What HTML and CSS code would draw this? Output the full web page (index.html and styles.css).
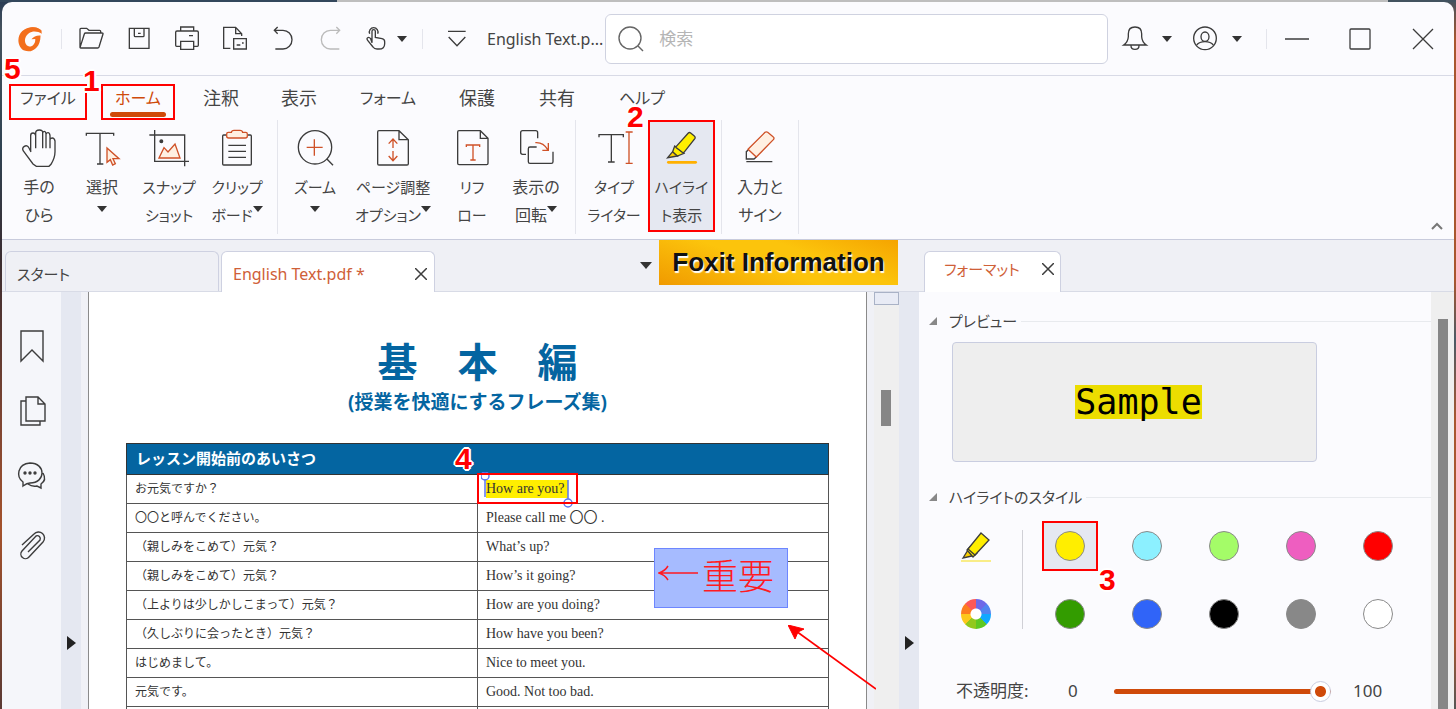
FILE: index.html
```html
<!DOCTYPE html>
<html lang="ja">
<head>
<meta charset="utf-8">
<title>English Text.pdf</title>
<link rel="stylesheet" href="styles.css">
</head>
<body>
<div class="window">
  <header class="titlebar">
    <svg class="logo" viewBox="50 74 80 80" aria-label="Foxit"><path d="M122 90C108 76 82 78 68 91C50 108 55 138 74 147C96 156 121 138 120 104C110 103 100 106 94 115L105 114C106 127 96 138 86 135C72 130 72 108 86 98C98 90 112 92 124 99Z" fill="#f36f1d"/><path d="M84 85C100 76 118 82 125 93C112 86 98 84 84 85Z" fill="#f36f1d"/></svg>
    <span class="divider"></span>
    <button class="tool" aria-label="開く"><svg viewBox="230 74 84 84"><path d="M239 142V87q0-3 3-3h17l7 6h32q3 0 3 3v6M239 142l13-41q1-3 4-3h49q4 0 3 3l-12 39q-1 3-4 3H241q-2 0-2-2"/></svg></button>
    <button class="tool" aria-label="保存"><svg viewBox="374 74 84 84"><path d="M387 84h59v60h-59zM402 84v22q0 3 3 3h23q3 0 3-3V84M413 99h8"/></svg></button>
    <button class="tool" aria-label="印刷"><svg viewBox="517 74 84 84"><path d="M540 92V80h39v12M540 138h-12q-3 0-3-3V96q0-4 4-4h60q4 0 4 4v39q0 3-3 3h-11M540 123h39v24h-39zM565 106h12"/></svg></button>
    <button class="tool" aria-label="ページ"><svg viewBox="660 74 84 84"><path d="M688 144h-20V81h36l18 19v7M704 81v19h18M698 115h38v31h-38zM707 134h11M723 128h5"/></svg></button>
    <button class="tool" aria-label="元に戻す"><svg viewBox="801 74 84 84"><path d="M827 80l-10 10 10 10M817 90h26a27 28 0 0 1 0 56h-23"/></svg></button>
    <button class="tool faded" aria-label="やり直し"><svg viewBox="945 74 84 84"><path d="M1003 80l10 10-10 10M1013 90h-28a27 28 0 0 0 0 56h27"/></svg></button>
    <button class="tool narrow" aria-label="タッチモード"><svg viewBox="1089 74 84 84"><path d="M1119 127V93q0-5 5-5t5 5v18l20 4q8 2 8 9v6q0 16-17 16h-6q-8 0-12-6l-16-20q-4-5 0-8t9 3zM1112 100a13 13 0 1 1 24 0"/></svg></button>
    <button class="drop" aria-label="タッチモードの選択"><svg class="caret" viewBox="0 0 10 6"><path d="M0 0h10l-5 6z"/></svg></button>
    <span class="divider"></span>
    <button class="tool" aria-label="カスタマイズ"><svg viewBox="1330 74 84 84"><path d="M1345 93h53M1347 110l25 26 25-26"/></svg></button>
    <span class="doc-name">English Text.p...</span>
    <label class="search">
      <svg viewBox="0 0 28 28"><circle cx="13" cy="13" r="11"/><path d="M21 21l5 5"/></svg>
      <input type="search" placeholder="検索" aria-label="検索">
    </label>
    <div class="account">
      <button class="tool narrow" aria-label="通知"><svg viewBox="434 74 84 84"><path d="M442 134q13-9 14-25v-9q0-20 20-20t20 20v9q1 16 14 25zM464 136q0 11 12 11t12-11"/></svg></button>
      <button class="drop" aria-label="通知の選択"><svg class="caret" viewBox="0 0 10 6"><path d="M0 0h10l-5 6z"/></svg></button>
      <button class="tool narrow" aria-label="ユーザー"><svg viewBox="645 74 84 84"><circle cx="687" cy="114" r="34"/><ellipse cx="687" cy="109" rx="12" ry="14"/><path d="M662 134q8-10 25-10t25 10"/></svg></button>
      <button class="drop" aria-label="ユーザーの選択"><svg class="caret" viewBox="0 0 10 6"><path d="M0 0h10l-5 6z"/></svg></button>
      <span class="divider"></span>
    </div>
    <div class="controls">
      <button class="tool" aria-label="最小化"><svg viewBox="0 0 28 28"><path d="M2 14h24"/></svg></button>
      <button class="tool" aria-label="最大化"><svg viewBox="0 0 28 28"><rect x="4" y="4" width="20" height="20" rx="1"/></svg></button>
      <button class="tool" aria-label="閉じる"><svg viewBox="0 0 28 28"><path d="M4 4l20 20M24 4L4 24"/></svg></button>
    </div>
  </header>

  <nav class="menu">
    <button class="menu-item boxed">ファイル<b class="step step-5">5</b></button>
    <button class="menu-item boxed current">ホーム<b class="step step-1">1</b></button>
    <button class="menu-item kanji">注釈</button>
    <button class="menu-item kanji">表示</button>
    <button class="menu-item">フォーム</button>
    <button class="menu-item kanji">保護</button>
    <button class="menu-item kanji">共有</button>
    <button class="menu-item">ヘルプ</button>
  </nav>

  <section class="ribbon">
    <div class="group group-tools">
      <button class="command"><svg viewBox="57 39 120 120"><path d="M92 108V62q0-8 7-8t8 8v38M107 62v-8q0-9 11-9t10 9v46M128 54q1-5 5-5t5 7v44M138 58q1-5 6-5t6 9v38M150 74q1-5 7-5t8 9v32q0 18-12 38l-6 6h-38l-10-7-29-39q-5-9 3-14t14 5l6 12"/></svg><span>手の<br>ひら</span></button>
      <button class="command"><svg viewBox="246 39 120 120"><path d="M259 62v-7h82v7M300 55v91M291 147h19"/><path class="accent" d="M321 99v43l10-8 7 16 8-4-7-15h18z"/></svg><span>選択<br><svg class="caret" viewBox="0 0 10 6"><path d="M0 0h10l-5 6z"/></svg></span></button>
      <button class="command kana"><svg viewBox="447 39 120 120"><path d="M448 60h106v94M464 45v94h103"/><circle class="dot" cx="484" cy="79" r="4"/><path class="accent" d="M477 129l15-31 12 13 21-24 15 42z"/></svg><span>スナップ<br>ショット</span></button>
      <button class="command kana"><svg viewBox="651 39 120 120"><rect x="668" y="60" width="86" height="90" rx="3"/><path class="accent" d="M694 52q1-6 8-6h18q7 0 8 6h9q5 0 5 5v6q0 6-6 6h-50q-6 0-6-6v-6q0-5 5-5z"/><path d="M685 91h53M685 109h53M685 127h53"/></svg><span>クリップ<br>ボード<svg class="caret" viewBox="0 0 10 6"><path d="M0 0h10l-5 6z"/></svg></span></button>
    </div>
    <div class="group group-view">
      <button class="command kana"><svg viewBox="885 39 120 120"><circle cx="945" cy="97" r="50"/><path d="M980 131l19 20"/><path class="line" d="M920 97h48M943 73v49"/></svg><span>ズーム<br><svg class="caret" viewBox="0 0 10 6"><path d="M0 0h10l-5 6z"/></svg></span></button>
      <button class="command kana"><svg viewBox="1119 39 120 120"><path d="M1197 47h-60q-4 0-4 4v95q0 4 4 4h84q4 0 4-4V74zM1197 48v26h27"/><path class="line" d="M1179 73v26M1166 86l13-14 13 14M1179 108v28M1166 123l13 14 13-14"/></svg><span>ページ調整<br>オプション<svg class="caret" viewBox="0 0 10 6"><path d="M0 0h10l-5 6z"/></svg></span></button>
      <button class="command kana"><svg viewBox="36 54 120 120"><path d="M121 62H57q-4 0-4 4v94q0 4 4 4h83q4 0 4-4V85zM121 63v22h23"/><path class="line" d="M79 111v-6h40v6M99 105v45M91 150h16"/></svg><span>リフ<br>ロー</span></button>
      <button class="command"><svg viewBox="228 54 120 120"><path d="M258 133h-10q-6 0-6-6V68q0-6 6-6h39q6 0 6 6v17M290 111h-20q-5 0-5 5v39q0 5 5 5h64q5 0 5-5v-30"/><path class="line" d="M286 98q24-2 37 21M325 99v22h-18"/></svg><span>表示の<br>回転<svg class="caret" viewBox="0 0 10 6"><path d="M0 0h10l-5 6z"/></svg></span></button>
    </div>
    <div class="group group-text">
      <button class="command kana"><svg viewBox="462 54 120 120"><path d="M477 82v-8h73v8M514 74v82M504 156h20"/><path class="line" d="M557 66h21M567 66v94M557 160h21"/></svg><span>タイプ<br>ライター</span></button>
      <button class="command kana active"><svg viewBox="664 54 120 120"><path d="M681 143l15-18 14 13z" fill="#fbd000"/><path d="M696 125l6-17 28 22-20 8z" fill="#ffee00"/><path d="M743 69q3-3 7 0l11 9q4 3 2 7l-33 42q-2 2-5 0l-18-14q-2-2 0-4z" fill="#ffee00"/><path class="underline" d="M683 157h82"/></svg><span>ハイライ<br>ト表示</span><b class="step step-2">2</b></button>
    </div>
    <div class="group group-sign">
      <button class="command"><svg viewBox="897 54 120 120"><path d="M922 120l-6 5v22h23l7-6M916 155h78"/><path class="accent" d="M972 67q4-3 8 0l17 14q4 3 0 8l-51 52-25-23z"/></svg><span>入力と<br>サイン</span></button>
    </div>
    <button class="collapse" aria-label="リボンを折りたたむ"><svg viewBox="0 0 12 8"><path d="M1 7l5-5 5 5"/></svg></button>
  </section>

  <div class="tabbar">
    <div class="doc-tabs">
      <button class="tab tab-doc kana">スタート</button>
      <div class="tab tab-doc selected"><span>English Text.pdf *</span><button class="close" aria-label="タブを閉じる"><svg viewBox="0 0 12 12"><path d="M0 0l12 12M12 0L0 12"/></svg></button></div>
      <button class="tab-list" aria-label="タブ一覧"><svg viewBox="0 0 12 7"><path d="M0 0h12l-6 7z"/></svg></button>
      <strong class="banner">Foxit Information</strong>
    </div>
    <div class="panel-tabs">
      <div class="tab tab-panel kana selected"><span>フォーマット</span><button class="close" aria-label="パネルを閉じる"><svg viewBox="0 0 12 12"><path d="M0 0l12 12M12 0L0 12"/></svg></button></div>
    </div>
  </div>

  <div class="workspace">
    <aside class="sidebar">
      <button aria-label="しおり"><svg viewBox="15 326 34 40"><path d="M21 331h22v30l-11-11-11 11z"/></svg></button>
      <button aria-label="ページ"><svg viewBox="15 392 34 40"><path d="M26 397h12l7 7v17H26zM38 397v7h7M26 401h-5v24h19v-4"/></svg></button>
      <button aria-label="注釈"><svg viewBox="15 458 34 40"><path d="M23 482c-7-5-6-18 7-19c16 0 16 20 0 20q-3 0-7 3zM43 473q4 7-2 11v4l-4-2q-5 1-9-2"/><circle class="dot" cx="25" cy="473" r="1"/><circle class="dot" cx="30" cy="473" r="1"/><circle class="dot" cx="35" cy="473" r="1"/></svg></button>
      <button aria-label="添付"><svg viewBox="15 524 34 40"><path d="M22 545l12-11a6 6 0 0 1 9 8l-14 15a4 4 0 0 1-7-6l14-15a3 3 0 0 1 4 4l-12 12"/></svg></button>
    </aside>
    <button class="handle" aria-label="ナビゲーションを開く"><svg viewBox="0 0 9 14"><path d="M0 0l9 7-9 7z"/></svg></button>
    <main class="canvas">
      <article class="page">
        <h1>基　本　編</h1>
        <p class="subtitle">(授業を快適にするフレーズ集)</p>
        <table class="phrases">
          <thead><tr><th colspan="2">レッスン開始前のあいさつ</th></tr></thead>
          <tbody>
            <tr><td>お元気ですか？</td><td class="english"><mark>How are you?<svg class="grips" viewBox="0 0 92 36"><path d="M4 7v18M87 8v19"/><circle cx="4" cy="4" r="4"/><circle cx="87" cy="31" r="4"/></svg><span class="frame"></span><b class="step step-4">4</b></mark></td></tr>
            <tr><td>〇〇と呼んでください。</td><td class="english">Please call me 〇〇 .</td></tr>
            <tr><td>（親しみをこめて）元気？</td><td class="english">What’s up?</td></tr>
            <tr><td>（親しみをこめて）元気？</td><td class="english">How’s it going?</td></tr>
            <tr><td>（上よりは少しかしこまって）元気？</td><td class="english">How are you doing?</td></tr>
            <tr><td>（久しぶりに会ったとき）元気？</td><td class="english">How have you been?</td></tr>
            <tr><td>はじめまして。</td><td class="english">Nice to meet you.</td></tr>
            <tr><td>元気です。</td><td class="english">Good. Not too bad.</td></tr>
            <tr><td>&nbsp;</td><td class="english">&nbsp;</td></tr>
          </tbody>
        </table>
        <div class="note"><svg viewBox="0 0 40 16"><path d="M1 8h39M10 1Q7 6 1 8q6 2 9 7"/></svg>重要</div>
        <svg class="pointer" viewBox="0 0 88 65"><path d="M88 64L8 6" stroke="#f00" stroke-width="1.6"/><path d="M0 0l16 4-6 3-3 7z" fill="#f00" stroke="#f00"/></svg>
      </article>
    </main>
    <div class="doc-scroll"><span class="split"></span><span class="thumb"></span></div>
    <button class="handle" aria-label="パネルを閉じる"><svg viewBox="0 0 9 14"><path d="M0 0l9 7-9 7z"/></svg></button>
    <aside class="panel">
      <div class="panel-body">
        <h2><svg viewBox="0 0 8 8"><path d="M8 0v8H0z"/></svg>プレビュー</h2>
        <div class="preview"><span>Sample</span></div>
        <h2><svg viewBox="0 0 8 8"><path d="M8 0v8H0z"/></svg>ハイライトのスタイル</h2>
        <div class="styles">
          <div class="kinds">
            <button aria-label="マーカー"><svg viewBox="0 0 32 32"><path d="M3 28l5-8 4 6z" fill="#fbd000"/><path d="M7 20l3-3 7 6-4 4z" fill="#ffee00"/><path d="M21 3l8 7-14 15-7-6z" fill="#ffee00"/><path class="base" d="M1 31h30"/></svg></button>
            <button aria-label="その他の色"><span class="wheel"></span></button>
          </div>
          <div class="swatches">
            <label class="swatch chosen"><input type="radio" name="color" class="yellow" aria-label="黄" checked><b class="step step-3">3</b></label>
            <label class="swatch"><input type="radio" name="color" class="cyan" aria-label="水色"></label>
            <label class="swatch"><input type="radio" name="color" class="lime" aria-label="黄緑"></label>
            <label class="swatch"><input type="radio" name="color" class="pink" aria-label="ピンク"></label>
            <label class="swatch"><input type="radio" name="color" class="red" aria-label="赤"></label>
            <label class="swatch"><input type="radio" name="color" class="green" aria-label="緑"></label>
            <label class="swatch"><input type="radio" name="color" class="blue" aria-label="青"></label>
            <label class="swatch"><input type="radio" name="color" class="black" aria-label="黒"></label>
            <label class="swatch"><input type="radio" name="color" class="gray" aria-label="灰"></label>
            <label class="swatch"><input type="radio" name="color" class="white" aria-label="白"></label>
          </div>
        </div>
        <div class="opacity">
          <label for="opacity">不透明度:</label>
          <span class="min">0</span>
          <input id="opacity" type="range" min="0" max="100" value="100">
          <output for="opacity">100</output>
        </div>
      </div>
      <div class="panel-scroll"><span class="thumb"></span></div>
    </aside>
  </div>
</div>
</body>
</html>
```
FILE: styles.css
```css
* { box-sizing: border-box; }

body {
  margin: 0;
  height: 100vh;
  padding: 2px 2px 0;
  overflow: hidden;
  background:
    linear-gradient(90deg, #33475c 337px, #bebebe 337px, #bebebe 1388px, #42525f 1388px) top / 100% 2px no-repeat,
    linear-gradient(#2a3c55 0, #46535e 30px, #2f4252 150px, #3a2c30 260px, #7e4532 420px, #a4522c 530px, #5a3a34 709px) left / 50% 100% no-repeat,
    linear-gradient(#42525f 0, #a8562e 40px, #a8562e 280px, #4b5a66 340px, #a8562e 420px, #a8562e 640px, #555 709px) right / 50% 100% no-repeat;
  color: #444;
  font-family: "Noto Sans", "Noto Sans CJK JP", sans-serif;
  font-size: 16px;
}

button {
  margin: 0;
  padding: 0;
  border: 0;
  background: none;
  color: inherit;
  font: inherit;
}

svg { display: block; fill: none; stroke: #3c3c3c; }
.dot { fill: #3c3c3c; }

.window {
  display: flex;
  flex-direction: column;
  height: 100%;
  overflow: hidden;
  border-radius: 10px 10px 0 0;
  background: #fbfbfe;
}

/* Title bar */
.titlebar {
  display: flex;
  align-items: center;
  flex: none;
  height: 74px;
  padding-left: 14px;
  border-bottom: 1px solid #d8dae6;
}
.logo { width: 28px; height: 28px; stroke: none; }
.divider { width: 1px; height: 20px; margin: 0 10px 0 14px; background: #e4e5ec; }
.logo + .divider { margin: 0 5px 0 17px; }
.tool { display: grid; place-items: center; width: 48px; height: 40px; }
.tool svg { width: 28px; height: 28px; stroke-width: 4; }
.faded svg { stroke: #bbb; }
.narrow { width: 41px; }
.drop { display: grid; place-items: center; width: 12px; height: 40px; }
.caret { width: 10px; height: 6px; stroke: none; fill: #333; }
.doc-name { margin-left: 6px; white-space: nowrap; }
.search {
  display: flex;
  flex: 1;
  align-items: center;
  gap: 12px;
  min-width: 0;
  height: 50px;
  margin-left: 2px;
  padding: 0 11px;
  border: 1px solid #cfd2e0;
  border-radius: 6px;
  background: #fff;
}
.search svg { flex: none; width: 28px; height: 28px; stroke: #666; stroke-width: 1.4; }
.search input {
  flex: 1;
  min-width: 0;
  border: 0;
  outline: 0;
  background: none;
  font: inherit;
  font-size: 17px;
}
.search input::placeholder { color: #b5b5b5; }
.account { display: flex; align-items: center; padding-left: 6px; }
.account .tool + .drop { margin: 0 11px 0 6px; }
.account .divider { margin: 0 6px 0 12px; }
.controls { display: flex; gap: 15px; padding-right: 7px; }
.controls svg { stroke-width: 1.3; }

/* Menu tabs */
.menu {
  display: grid;
  grid-template-columns: 78px 74px 64px 64px 86px 64px 68px 74px;
  gap: 14px;
  flex: none;
  height: 44px;
  padding: 8px 7px 2px;
}
.menu-item {
  position: relative;
  padding-bottom: 8px;
  font-size: 16px;
  font-feature-settings: "palt";
  line-height: 24px;
  white-space: nowrap;
}
.kanji { font-size: 18px; }
.boxed { border: 2px solid #f00; }
.current { color: #cf4a0a; }
.current::after {
  content: "";
  position: absolute;
  right: 7px;
  bottom: 1px;
  left: 7px;
  height: 5px;
  border-radius: 3px;
  background: #cf4a0a;
}
.step {
  position: absolute;
  z-index: 2;
  color: #f00;
  font: bold 30px/22px "Liberation Sans", sans-serif;
  text-shadow: 2px 0 #fff, -2px 0 #fff, 0 2px #fff, 0 -2px #fff, 1px 1px #fff, -1px -1px #fff, 1px -1px #fff, -1px 1px #fff;
}
.step-5 { top: -28px; left: -7px; }
.step-1 { top: -16px; left: -20px; }
.step-2 { top: -16px; left: -23px; }
.step-3 { top: 46px; left: 55px; }
.step-4 { top: -32px; left: -31px; }

/* Ribbon */
.ribbon {
  display: flex;
  flex: none;
  height: 120px;
  padding-left: 6px;
  border-bottom: 1px solid #c8cbdc;
}
.group { display: grid; height: 114px; border-right: 1px solid #e4e5ec; }
.group-tools { grid-template-columns: 62px 64px 70px 66px; padding-right: 7px; }
.group-view { grid-template-columns: 60px 96px 62px 66px; padding: 0 6px 0 7px; }
.group-text { grid-template-columns: 68px 67px; padding: 0 6px 0 4px; }
.group-sign { grid-template-columns: 64px; padding: 0 6px; }
.command {
  position: relative;
  display: flex;
  flex-direction: column;
  align-items: center;
  gap: 5px;
  height: 112px;
  padding-top: 8px;
}
.command > svg { flex: none; width: 40px; height: 40px; stroke-width: 4; }
.command > span {
  font-feature-settings: "palt";
  line-height: 28px;
  white-space: nowrap;
}
.kana { font-size: 15px; }
.command .caret { display: inline-block; vertical-align: 2px; }
.command br + .caret { vertical-align: 9px; }
.accent { fill: #fff0e2; stroke: #cf5228; }
.line { stroke: #cf5228; }
.underline { stroke: #ffb000; stroke-width: 8; stroke-linecap: round; }
.active { border: 2px solid #f00; padding-top: 6px; background: #e5e8f1; }
.collapse { align-self: flex-end; margin: 0 11px 9px auto; }
.collapse svg { width: 12px; height: 8px; stroke: #777; stroke-width: 2; }

/* Tab bar */
.tabbar {
  display: flex;
  flex: none;
  height: 52px;
  border-bottom: 1px solid #d8dbe6;
  background: #eff0f5;
}
.doc-tabs { display: flex; flex: 1; align-items: flex-end; gap: 2px; min-width: 0; padding: 0 21px 0 3px; }
.panel-tabs { display: flex; flex: none; align-items: flex-end; width: 535px; padding-left: 5px; }
.tab {
  display: flex;
  align-items: center;
  justify-content: space-between;
  height: 40px;
  padding: 4px 7px 0 11px;
  border: 1px solid #ced1e1;
  border-bottom: 0;
  border-radius: 6px 6px 0 0;
  font-feature-settings: "palt";
  white-space: nowrap;
}
.tab-doc { width: 214px; }
.tab-panel { width: 137px; padding: 0 6px 7px 19px; }
.selected { height: 41px; margin-bottom: -1px; background: #fff; color: #cf6038; }
.close svg { width: 12px; height: 12px; stroke-width: 1.5; }
.tab-list { align-self: center; margin: 0 5px 0 auto; }
.tab-list svg { width: 12px; height: 7px; stroke: none; fill: #333; }
.banner {
  align-self: flex-start;
  width: 239px;
  height: 45px;
  background: linear-gradient(20deg, #f09a00, #fcc40c 45%, #fcc40c 65%, #f5a400);
  color: #111;
  font: bold 26px/45px "Liberation Sans", sans-serif;
  text-align: center;
  text-shadow: 1px 2px 1px #fff;
  white-space: nowrap;
}

/* Workspace */
.workspace { display: flex; flex: 1; min-height: 0; overflow: hidden; }
.sidebar { display: flex; flex: none; flex-direction: column; width: 59px; padding-top: 21px; background: #f5f6fa; }
.sidebar button { display: grid; flex: none; place-items: center; height: 66px; }
.sidebar svg { width: 34px; height: 40px; stroke-width: 1.4; }
.handle {
  display: flex;
  flex: none;
  justify-content: center;
  width: 20px;
  padding-top: 344px;
  background: #e5e8f1;
}
.handle svg { width: 9px; height: 14px; stroke: none; fill: #222; }
.canvas { flex: 1; min-width: 0; padding: 0 7px; background: #f0f1f6; }
.page {
  position: relative;
  min-height: 100%;
  padding: 42px 37px 0;
  border: solid #8a8a8a;
  border-width: 0 1px;
  background: #fff;
}
.page h1 {
  margin: 0;
  color: #0465a1;
  font-size: 40px;
  font-weight: bold;
  line-height: 56px;
  text-align: center;
}
.subtitle {
  margin: 0 0 29px;
  color: #0465a1;
  font-size: 19px;
  font-weight: bold;
  line-height: 24px;
  text-align: center;
}
.phrases { width: 100%; border-collapse: collapse; table-layout: fixed; color: #333; }
.phrases th {
  height: 31px;
  padding: 0 9px 2px;
  border: 1px solid #333;
  background: #0465a1;
  color: #fff;
  font-size: 15px;
  line-height: 20px;
  text-align: left;
}
.phrases td {
  height: 29px;
  padding: 0 8px;
  border: 1px solid #555;
  font-size: 12px;
  line-height: 18px;
}
.phrases .english { font-family: "Liberation Serif", "Noto Sans CJK JP", serif; font-size: 14px; }
mark { position: relative; display: inline-block; padding-right: 3px; background: #ffee00; color: #333; }
.grips { position: absolute; top: -8px; left: -5px; width: 92px; height: 36px; stroke: #5b76f0; stroke-width: 1.5; }
.frame { position: absolute; top: -7px; left: -9px; width: 101px; height: 31px; border: 2px solid #f00; }
.note {
  position: absolute;
  top: 256px;
  right: 78px;
  display: flex;
  gap: 4px;
  width: 134px;
  height: 60px;
  padding-left: 3px;
  border: 1px solid #6d86ff;
  background: #a6bbff;
  color: #ff1a22;
  font-size: 36px;
  font-weight: 300;
  line-height: 56px;
}
.note svg { width: 40px; height: 16px; margin-top: 16px; stroke: #ff1a22; stroke-width: 1.5; }
.pointer { position: absolute; top: 333px; right: -10px; z-index: 3; width: 88px; height: 65px; }

.doc-scroll { flex: none; width: 25px; background: #efefef; }
.split { display: block; height: 13px; border: 1px solid #a9b2c6; background: #e8ebf5; }
.thumb { display: block; width: 10px; background: #868686; }
.doc-scroll .thumb { height: 36px; margin: 85px 0 0 7px; }

/* Format panel */
.panel { display: flex; flex: none; width: 535px; }
.panel-body { flex: 1; padding: 16px 0 0 10px; }
.panel h2 {
  display: flex;
  align-items: center;
  margin: 0;
  color: #444;
  font-size: 15px;
  font-weight: normal;
  font-feature-settings: "palt";
  line-height: 26px;
}
.panel h2::after { content: ""; flex: 1; height: 1px; margin-left: 4px; background: #e8eaee; }
.panel h2 svg { width: 8px; height: 8px; margin-right: 12px; stroke: none; fill: #888; }
.preview {
  display: grid;
  place-items: center;
  width: 365px;
  height: 120px;
  margin: 8px 0 22px 23px;
  padding-left: 8px;
  border: 1px solid #c9cde0;
  border-radius: 4px;
  background: #eee;
}
.preview span {
  background: #ecdd00;
  color: #000;
  font: 35px/34px "DejaVu Sans Mono", monospace;
}
.styles { display: flex; padding: 11px 0 0 23px; }
.kinds { display: grid; grid-template-rows: 50px 50px; gap: 18px; width: 48px; }
.kinds button { display: grid; place-items: center; }
.kinds svg { width: 32px; height: 32px; stroke-width: 1.3; }
.kinds .base { stroke: #f8e860; stroke-width: 1.5; }
.wheel {
  width: 30px;
  height: 30px;
  border-radius: 50%;
  background:
    radial-gradient(circle, #fff 5px, transparent 6px),
    conic-gradient(#6e68e8 45deg, #5084f0 45deg 90deg, #10a8ff 90deg 135deg, #5ec822 135deg 180deg, #92c81c 180deg 225deg, #fcc81c 225deg 270deg, #fc7d20 270deg 315deg, #fc5858 315deg);
}
.swatches {
  display: grid;
  grid-template: 50px 50px / repeat(5, 56px);
  gap: 18px 21px;
  position: relative;
  margin-left: 42px;
}
.swatches::before {
  content: "";
  position: absolute;
  top: 9px;
  bottom: 10px;
  left: -20px;
  width: 1px;
  background: #d0d0d6;
}
.swatch { position: relative; display: grid; place-items: center; }
.swatch input {
  width: 30px;
  height: 30px;
  margin: 0;
  border: 1px solid #8a8a8a;
  border-radius: 50%;
  appearance: none;
}
.chosen { border: 2px solid #f00; background: #e5e8f1; }
.yellow { background: #ffee00; }
.cyan { background: #8cf0ff; }
.lime { background: #a4fc68; }
.pink { background: #ee5ec0; }
.red { background: #f00; }
.green { background: #339c00; }
.blue { background: #3064f8; }
.black { background: #000; }
.gray { background: #888; }
.white { background: #fff; }
.opacity { display: flex; align-items: center; margin-top: 39px; padding-left: 27px; line-height: 26px; }
.opacity label { width: 112px; font-size: 17px; white-space: nowrap; }
.min { width: 46px; font-size: 17px; }
.opacity input { width: 217px; height: 22px; margin: 0; background: none; appearance: none; }
.opacity input::-webkit-slider-runnable-track { height: 5px; border-radius: 3px; background: #cf4a0a; }
.opacity input::-webkit-slider-thumb {
  width: 21px;
  height: 21px;
  margin-top: -8px;
  border: 1px solid #c9cde0;
  border-radius: 50%;
  background: radial-gradient(circle, #cf4a0a 5px, #fff 6px);
  appearance: none;
}
.opacity output { margin-left: 22px; font-size: 17px; }
.panel-scroll { width: 23px; padding: 27px 0 0 7px; background: #efefef; }
.panel-scroll .thumb { height: 100%; }
```
